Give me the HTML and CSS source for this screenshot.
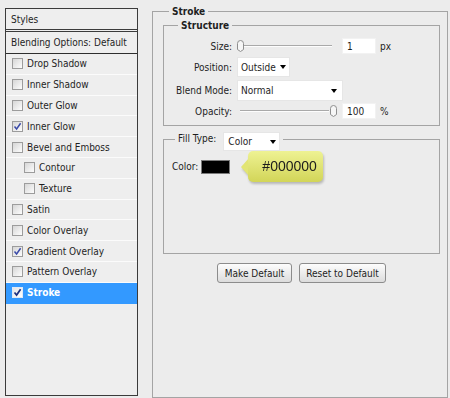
FILE: index.html
```html
<!DOCTYPE html>
<html>
<head>
<meta charset="utf-8">
<link rel="stylesheet" href="styles.css">
</head>
<body>
<div class="styles-panel">
  <div class="panel-head">Styles</div>
  <div class="panel-blend">Blending Options: Default</div>
  <ul class="fx-list">
    <li class="fx"><span class="cb"></span>Drop Shadow</li>
    <li class="fx"><span class="cb"></span>Inner Shadow</li>
    <li class="fx"><span class="cb"></span>Outer Glow</li>
    <li class="fx"><span class="cb"><svg width="9" height="9" viewBox="0 0 9 9"><path d="M1.5 4.5 L3.6 7 L7.6 1.3" fill="none" stroke="#3a4aa8" stroke-width="1.5"/></svg></span>Inner Glow</li>
    <li class="fx"><span class="cb"></span>Bevel and Emboss</li>
    <li class="fx sub"><span class="cb"></span>Contour</li>
    <li class="fx sub"><span class="cb"></span>Texture</li>
    <li class="fx"><span class="cb"></span>Satin</li>
    <li class="fx"><span class="cb"></span>Color Overlay</li>
    <li class="fx"><span class="cb"><svg width="9" height="9" viewBox="0 0 9 9"><path d="M1.5 4.5 L3.6 7 L7.6 1.3" fill="none" stroke="#3a4aa8" stroke-width="1.5"/></svg></span>Gradient Overlay</li>
    <li class="fx"><span class="cb"></span>Pattern Overlay</li>
    <li class="fx selected"><span class="cb cb-sel"><svg width="9" height="9" viewBox="0 0 9 9"><path d="M1.5 4.5 L3.6 7 L7.6 1.3" fill="none" stroke="#1c2f80" stroke-width="1.7"/></svg></span>Stroke</li>
  </ul>
</div>

<fieldset class="group outer">
  <legend>Stroke</legend>

  <fieldset class="group structure">
    <legend>Structure</legend>
    <div class="row row-size">
      <span class="lbl">Size:</span>
      <div class="slider">
        <svg class="thumb" width="7" height="12" viewBox="0 0 7 12"><path d="M0.5 3.5 Q0.5 0.5 3.5 0.5 Q6.5 0.5 6.5 3.5 L6.5 9.5 L3.5 11.5 L0.5 9.5 Z" fill="#f6f6f6" stroke="#8e8e8e"/></svg>
        <div class="track track-size"></div>
      </div>
      <div class="num">1</div>
      <span class="unit">px</span>
    </div>
    <div class="row row-pos">
      <span class="lbl">Position:</span>
      <div class="select sel-pos">Outside<span class="caret"></span></div>
    </div>
    <div class="row row-blend">
      <span class="lbl">Blend Mode:</span>
      <div class="select sel-blend">Normal<span class="caret"></span></div>
    </div>
    <div class="row row-op">
      <span class="lbl">Opacity:</span>
      <div class="slider">
        <div class="track track-op"></div>
        <svg class="thumb" width="7" height="12" viewBox="0 0 7 12"><path d="M0.5 3.5 Q0.5 0.5 3.5 0.5 Q6.5 0.5 6.5 3.5 L6.5 9.5 L3.5 11.5 L0.5 9.5 Z" fill="#f6f6f6" stroke="#8e8e8e"/></svg>
      </div>
      <div class="num">100</div>
      <span class="unit">%</span>
    </div>
  </fieldset>

  <fieldset class="group fill">
    <legend class="fill-legend"><span class="legend-inner"><span class="fill-lbl">Fill Type:</span><span class="select sel-color">Color<span class="caret"></span></span></span></legend>
    <div class="color-row">
      <span class="color-lbl">Color:</span>
      <span class="swatch"></span>
      <div class="tip">
        <svg class="tip-arrow" width="8" height="18" viewBox="0 0 8 18"><path d="M8 0 L0 9 L8 18 Z" fill="#e2e574"/></svg>
        <div class="tip-body">#000000</div>
      </div>
    </div>
  </fieldset>

  <div class="buttons">
    <button class="btn btn-make">Make Default</button>
    <button class="btn btn-reset">Reset to Default</button>
  </div>
</fieldset>
</body>
</html>
```
FILE: styles.css
```css
* { box-sizing: border-box; }

body {
  margin: 0;
  width: 450px;
  height: 398px;
  overflow: hidden;
  background: #ececec;
  font-family: "DejaVu Sans Condensed", "DejaVu Sans", sans-serif;
  font-stretch: condensed;
  font-size: 10px;
  line-height: 13px;
  color: #1e1e1e;
  display: flex;
  align-items: flex-start;
}

/* ---------- left styles list ---------- */
.styles-panel {
  flex: none;
  margin: 8px 0 0 5px;
  width: 133px;
  height: 388px;
  border: 1px solid #3b3b3b;
  background: #eeeeee;
}

.panel-head {
  height: 23px;
  padding-left: 5px;
  display: flex;
  align-items: center;
  border-bottom: 3px double #3b3b3b;
}

.panel-blend {
  height: 22px;
  padding-left: 5px;
  display: flex;
  align-items: center;
  border-bottom: 1px solid #2e2e2e;
}

.fx-list {
  list-style: none;
  margin: 0;
  padding: 0;
}

.fx {
  height: 20.8px;
  padding-left: 6px;
  display: flex;
  align-items: center;
  gap: 4px;
  border-bottom: 1px solid #fbfbfb;
}

.fx.sub { padding-left: 18px; }

.fx.selected {
  background: #3399ff;
  border-bottom-color: #3399ff;
  color: #fff;
  font-weight: bold;
}

.cb {
  flex: none;
  width: 11px;
  height: 11px;
  border: 1px solid #9c9c9c;
  background: linear-gradient(135deg, #d6d6d6, #fdfdfd);
  display: flex;
  align-items: center;
  justify-content: center;
}

.cb-sel {
  border-color: #dfe9f7;
  background: linear-gradient(135deg, #e4e4e4, #ffffff);
}

/* ---------- right side ---------- */
.group {
  margin: 0;
  min-width: 0;
  border: 1px solid #a4a4a4;
}

.group > legend {
  padding: 0 3px;
  font-weight: bold;
  line-height: 13px;
}

.outer {
  flex: none;
  margin: 5px 0 0 14px;
  width: 296px;
  height: 393px;
  padding: 1px 7px 0 10px;
}

.outer > legend { margin-left: 6px; }

.structure {
  padding: 6px 0 6px 0;
}

.structure > legend { margin-left: 14px; }

.row {
  display: flex;
  align-items: center;
}

.row-size { height: 16px; }
.row-pos { height: 20px; margin-top: 3px; }
.row-blend { height: 21px; margin-top: 3px; }
.row-op { height: 16px; margin-top: 2px; }

.lbl {
  flex: none;
  width: 68px;
  margin-right: 5px;
  text-align: right;
}

.slider {
  flex: none;
  width: 100px;
  height: 12px;
  margin-right: 5px;
  display: flex;
  align-items: center;
}

.thumb { flex: none; display: block; }

.track {
  flex: 1;
  height: 2px;
  border-top: 1px solid #a9a9a9;
  border-bottom: 1px solid #fdfdfd;
}

.track-size { margin-right: 5px; }
.track-op { margin-left: 3px; margin-right: 1px; }

.num {
  flex: none;
  width: 34px;
  height: 16px;
  margin-right: 4px;
  padding-left: 4px;
  background: #fff;
  border: 1px solid #f2f2f2;
  display: flex;
  align-items: center;
}

.select {
  display: flex;
  align-items: center;
  height: 20px;
  padding: 0 3px 0 3px;
  background: #fff;
  border: 1px solid #e6e6e6;
}

.sel-pos { width: 53px; }
.sel-blend { width: 106px; height: 21px; padding-right: 5px; }

.caret {
  margin-left: auto;
  width: 0;
  height: 0;
  border-left: 3.5px solid transparent;
  border-right: 3.5px solid transparent;
  border-top: 4px solid #000;
}

.fill {
  margin-top: 6px;
  height: 122px;
  padding: 4px 0 0 8px;
}

.fill > legend.fill-legend {
  margin-left: 3px;
  font-weight: normal;
  height: 15px;
}

.legend-inner {
  display: flex;
  align-items: flex-start;
}

.fill-lbl { line-height: 13px; }

.sel-color {
  width: 57px;
  height: 19px;
  margin-left: 7px;
  margin-bottom: -4px;
  padding-left: 4px;
  padding-right: 3px;
}

.color-row {
  display: flex;
  align-items: center;
  height: 31px;
}

.swatch {
  flex: none;
  width: 29px;
  height: 14px;
  margin-left: 3px;
  background: #000;
  border: 1px solid #7a7a7a;
}

.tip {
  display: flex;
  align-items: center;
  margin-left: 11px;
  filter: drop-shadow(1px 2px 1px rgba(0, 0, 0, 0.22));
}

.tip-arrow { display: block; flex: none; margin-right: -1px; }

.tip-body {
  width: 75px;
  height: 31px;
  padding-left: 14px;
  border-radius: 5px;
  background: linear-gradient(#eef293, #d2d558);
  display: flex;
  align-items: center;
  font-family: "Liberation Sans", Arial, sans-serif;
  font-stretch: normal;
  font-size: 14px;
  color: #1c1c1c;
}

.buttons {
  display: flex;
  justify-content: center;
  gap: 7px;
  margin-top: 9px;
}

.btn {
  height: 20px;
  padding: 0;
  border: 1px solid #8c8c8c;
  border-radius: 3px;
  background: linear-gradient(#fdfdfd, #dcdcdc);
  font: inherit;
  font-stretch: condensed;
  color: #1e1e1e;
}

.btn-make { width: 75px; }
.btn-reset { width: 87px; }
```
